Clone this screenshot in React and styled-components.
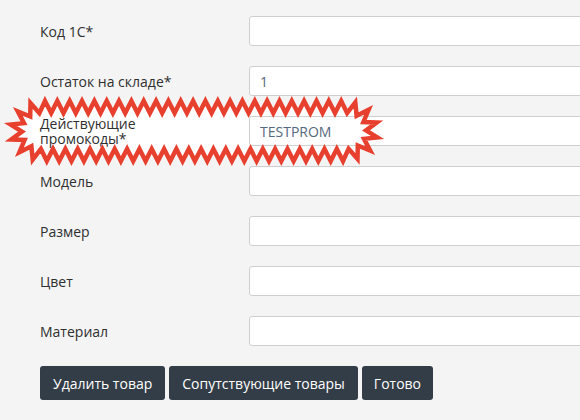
import React from "react";
import styled, { createGlobalStyle } from "styled-components";

const GlobalStyle = createGlobalStyle`
  html, body {
    margin: 0;
    padding: 0;
    background: #f4f4f4;
    overflow: hidden;
  }
  body {
    font-family: "Open Sans", "DejaVu Sans", sans-serif;
    font-size: 14px;
    color: #333;
  }
`;

const Page = styled.div`
  width: 580px;
  height: 420px;
  overflow: hidden;
  box-sizing: border-box;
  padding: 16px 0 0 40px;
`;

const Form = styled.form`
  display: flex;
  flex-direction: column;
  gap: 20px;
`;

const Row = styled.div`
  position: relative;
  display: grid;
  grid-template-columns: 150px 400px;
  column-gap: 59px;
  align-items: center;
  height: 30px;
`;

const Label = styled.label`
  position: relative;
  z-index: 1;
  font-size: 14px;
  line-height: 15px;
  color: #2f2f2f;
`;

const Input = styled.input`
  position: relative;
  z-index: 1;
  box-sizing: border-box;
  width: 400px;
  height: 30px;
  padding: 0 10px;
  border: 1px solid #cfcfcf;
  border-radius: 3px;
  background: #fff;
  font-family: "Open Sans", "DejaVu Sans", sans-serif;
  font-size: 14px;
  color: #56687e;
  outline: none;
`;

const Actions = styled.div`
  display: flex;
  gap: 4px;
`;

const Button = styled.button`
  height: 34px;
  padding: 0 ${(p) => (p.$narrow ? 12 : 13)}px;
  border: none;
  border-radius: 3px;
  background: #333d47;
  color: #fff;
  font-family: "Open Sans", "DejaVu Sans", sans-serif;
  font-size: 14px;
  cursor: pointer;
`;

const Burst = styled.svg`
  position: absolute;
  left: -40px;
  top: -20px;
  width: 400px;
  height: 70px;
  z-index: ${(p) => (p.$front ? 2 : 0)};
  pointer-events: none;
  overflow: visible;
`;

// zigzag outline around a stadium shape, coordinates in the svg box
function burstPath() {
  const cy = 35;
  const x1 = 42;
  const x2 = 346;
  const rx = 26;
  const ry = 24;
  const amp = 6;
  const top = x2 - x1;
  const arc = (Math.PI * (rx + ry)) / 2;
  const total = 2 * top + 2 * arc;
  const at = (s) => {
    s = ((s % total) + total) % total;
    if (s < top) return [x1 + s, cy - ry];
    s -= top;
    if (s < arc) {
      const a = -Math.PI / 2 + (s / arc) * Math.PI;
      return [x2 + rx * Math.cos(a), cy + ry * Math.sin(a)];
    }
    s -= arc;
    if (s < top) return [x2 - s, cy + ry];
    s -= top;
    const a = Math.PI / 2 + (s / arc) * Math.PI;
    return [x1 + rx * Math.cos(a), cy + ry * Math.sin(a)];
  };
  const n = 62 * 2;
  const pts = [];
  for (let i = 0; i < n; i++) {
    const s = (i / n) * total + 3;
    const [px, py] = at(s);
    const [ax, ay] = at(s - 0.5);
    const [bx, by] = at(s + 0.5);
    const len = Math.hypot(bx - ax, by - ay) || 1;
    const nx = (by - ay) / len;
    const ny = -(bx - ax) / len;
    const d = i % 2 === 0 ? amp : -amp;
    pts.push(`${(px + nx * d).toFixed(1)},${(py + ny * d).toFixed(1)}`);
  }
  return "M" + pts.join("L") + "Z";
}

const BURST = burstPath();

const fields = [
  { label: "Код 1С*", value: "" },
  { label: "Остаток на складе*", value: "1" },
  { label: "Действующие промокоды*", value: "TESTPROM", marked: true },
  { label: "Модель", value: "" },
  { label: "Размер", value: "" },
  { label: "Цвет", value: "" },
  { label: "Материал", value: "" },
];

export default function App() {
  return (
    <>
      <GlobalStyle />
      <Page>
        <Form onSubmit={(e) => e.preventDefault()}>
          {fields.map((f) => (
            <Row key={f.label}>
              {f.marked && (
                <Burst viewBox="0 0 400 70">
                  <path d={BURST} fill="#fff" />
                </Burst>
              )}
              <Label>{f.label}</Label>
              <Input defaultValue={f.value} />
              {f.marked && (
                <Burst viewBox="0 0 400 70" $front>
                  <path
                    d={BURST}
                    fill="none"
                    stroke="#e8402f"
                    strokeWidth="4.5"
                    strokeLinejoin="miter"
                  />
                </Burst>
              )}
            </Row>
          ))}
          <Actions>
            <Button type="button">Удалить товар</Button>
            <Button type="button">Сопутствующие товары</Button>
            <Button type="submit" $narrow>
              Готово
            </Button>
          </Actions>
        </Form>
      </Page>
    </>
  );
}
